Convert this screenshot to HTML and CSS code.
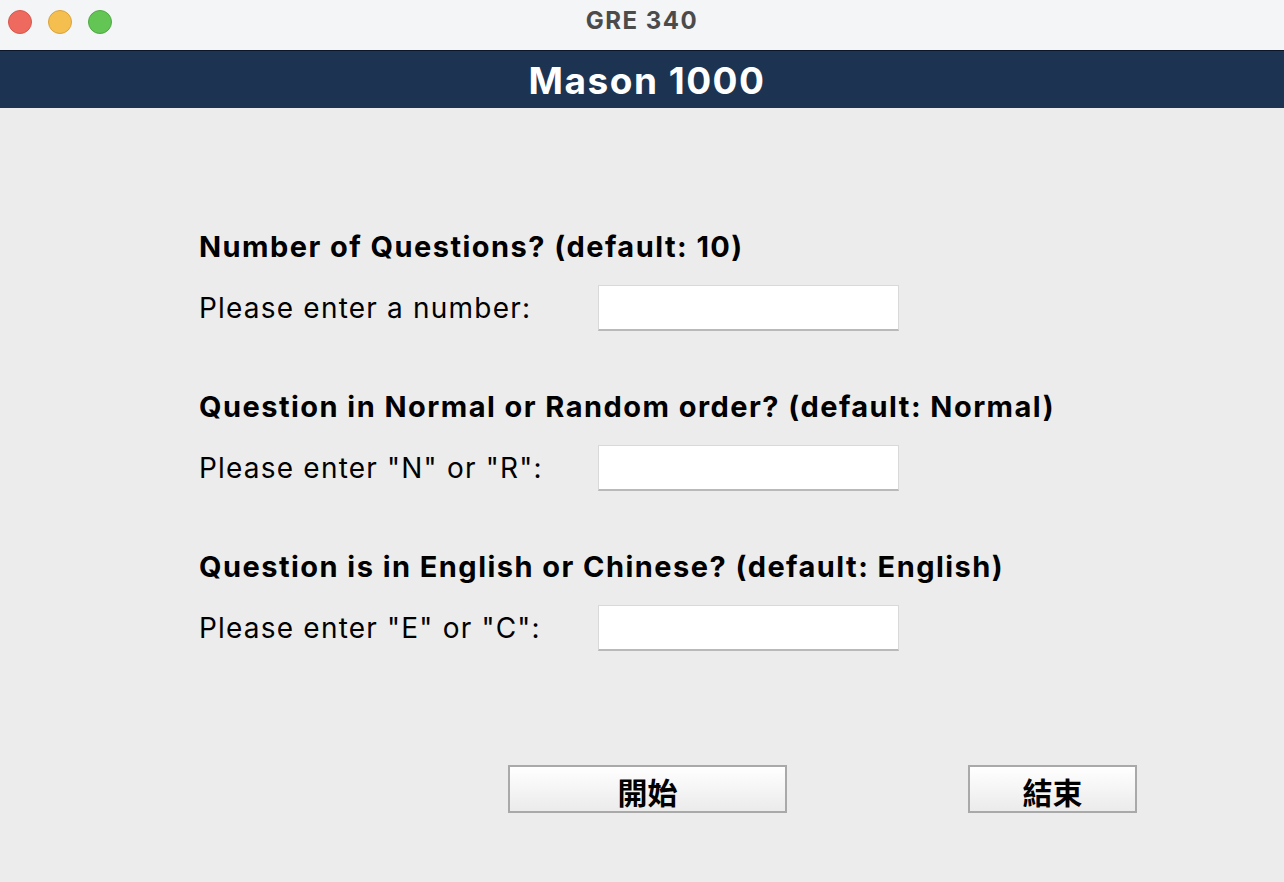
FILE: index.html
```html
<!DOCTYPE html>
<html>
<head>
<meta charset="utf-8">
<link rel="stylesheet" href="styles.css">
</head>
<body>
<div class="window">
  <div class="titlebar">
    <div class="lights">
      <span class="light red"></span>
      <span class="light yellow"></span>
      <span class="light green"></span>
    </div>
    <div class="title">GRE 340</div>
  </div>
  <div class="header">Mason 1000</div>
  <div class="content">
    <div class="form">
      <div class="section">
        <div class="heading">Number of Questions? (default: 10)</div>
        <div class="row">
          <span class="label">Please enter a number:</span>
          <input class="field" type="text">
        </div>
      </div>
      <div class="section">
        <div class="heading">Question in Normal or Random order? (default: Normal)</div>
        <div class="row">
          <span class="label">Please enter "N" or "R":</span>
          <input class="field" type="text">
        </div>
      </div>
      <div class="section">
        <div class="heading">Question is in English or Chinese? (default: English)</div>
        <div class="row">
          <span class="label">Please enter "E" or "C":</span>
          <input class="field" type="text">
        </div>
      </div>
    </div>
    <div class="buttons">
      <button class="btn start">開始</button>
      <button class="btn end">結束</button>
    </div>
  </div>
</div>
</body>
</html>
```

FILE: styles.css
```css
* { box-sizing: border-box; }
html, body {
  margin: 0;
  padding: 0;
  width: 1284px;
  height: 882px;
  overflow: hidden;
  background: #ececec;
  font-family: Inter, "Noto Sans CJK TC", sans-serif;
}
.window {
  display: flex;
  flex-direction: column;
  height: 882px;
}
.titlebar {
  height: 51px;
  background: #f4f5f7;
  border-bottom: 1px solid #0c1626;
  position: relative;
  display: flex;
  align-items: center;
  justify-content: center;
}
.lights {
  position: absolute;
  left: 8px;
  top: 10px;
  display: flex;
  gap: 16px;
}
.light {
  width: 24px;
  height: 24px;
  border-radius: 50%;
  display: block;
}
.red { background: #ee6a5f; border: 1px solid #d5574d; }
.yellow { background: #f5bf4f; border: 1px solid #d9a23c; }
.green { background: #62c554; border: 1px solid #50a843; }
.title {
  font-size: 24px;
  font-weight: 700;
  letter-spacing: 1.5px;
  color: #4b4b4b;
  margin-top: -10px;
}
.header {
  height: 57px;
  background: #1c3352;
  color: #ffffff;
  font-size: 37px;
  font-weight: 700;
  letter-spacing: 1.5px;
  text-align: center;
  line-height: 60px;
  padding-left: 10px;
}
.content {
  flex: 1;
  display: flex;
  flex-direction: column;
}
.form {
  padding: 124px 0 0 199px;
  display: flex;
  flex-direction: column;
  gap: 61px;
}
.section {
  display: flex;
  flex-direction: column;
  gap: 23px;
}
.heading {
  font-size: 29px;
  font-weight: 700;
  letter-spacing: 1.45px;
  color: #000;
  line-height: 30px;
}
.row {
  display: flex;
  align-items: center;
  height: 46px;
}
.label {
  width: 399px;
  font-size: 28px;
  letter-spacing: 1.2px;
  color: #000;
}
.field {
  width: 301px;
  height: 46px;
  background: #fff;
  border: 1px solid #d9d9d9;
  border-bottom: 2px solid #b9b9b9;
  margin: 0;
  padding: 0;
  outline: none;
}
.buttons {
  display: flex;
  padding: 114px 0 0 508px;
  gap: 181px;
}
.btn {
  height: 48px;
  border: 2px solid #a9a9a9;
  background: linear-gradient(#ffffff, #ebebeb);
  font-family: "Noto Sans CJK TC", sans-serif;
  font-size: 30px;
  font-weight: 700;
  color: #000;
  padding: 3px 0 0 0;
  line-height: 40px;
}
.start { width: 279px; }
.end { width: 169px; }
```
